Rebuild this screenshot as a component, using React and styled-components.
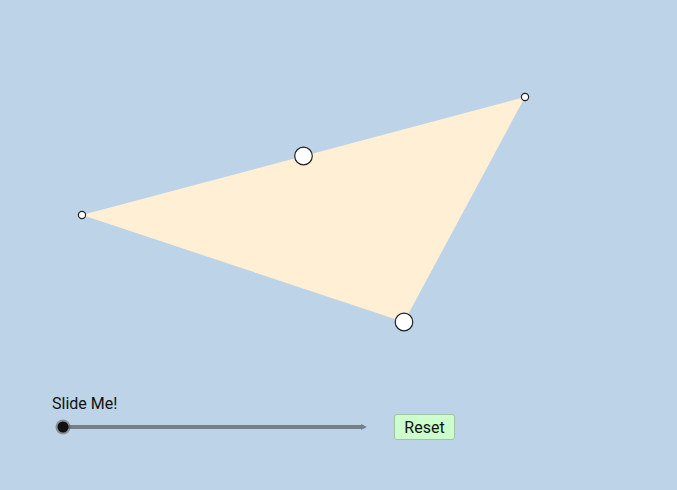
import React, { useState } from "react";
import styled, { createGlobalStyle } from "styled-components";

const GlobalStyle = createGlobalStyle`
    html, body {
        margin: 0;
        padding: 0;
        background: #bdd3e7;
    }
`;

const points = {
    a: { x: 82, y: 215 },
    b: { x: 525, y: 97 },
    c: { x: 404, y: 322 },
};

function App() {
    const [value] = useState(0);
    const mid = {
        x: (points.a.x + points.b.x) / 2,
        y: (points.a.y + points.b.y) / 2,
    };

    return (
        <>
            <GlobalStyle />
            <Page>
                <Stage width="677" height="390" viewBox="0 0 677 390">
                    <polygon
                        points={`${points.a.x},${points.a.y} ${points.b.x},${points.b.y} ${points.c.x},${points.c.y}`}
                        fill="#ffefd5"
                    />
                    <Point cx={points.a.x} cy={points.a.y} r="3.6" />
                    <Point cx={points.b.x} cy={points.b.y} r="3.6" />
                    <Point cx={mid.x} cy={mid.y} r="8.8" />
                    <Point cx={points.c.x} cy={points.c.y} r="8.8" />
                </Stage>
                <Controls>
                    <Label>Slide Me!</Label>
                    <Slider width="320" height="16" viewBox="0 0 320 16">
                        <line x1="11" y1="8" x2="311" y2="8" stroke="#757f88" strokeWidth="4" />
                        <polygon points="309,5 315,8 309,11" fill="#757f88" />
                        <circle cx={11 + value} cy="8" r="7.5" fill="#5a5a5a" opacity="0.55" />
                        <circle cx={11 + value} cy="8" r="5.5" fill="#111" />
                    </Slider>
                    <ResetButton>Reset</ResetButton>
                </Controls>
            </Page>
        </>
    );
}

export default App;

const Page = styled.div`
    width: 677px;
    height: 490px;
    background: #bdd3e7;
    font-family: Roboto, "Liberation Sans", sans-serif;
    overflow: hidden;
`;

const Stage = styled.svg`
    display: block;
`;

const Point = styled.circle`
    fill: #ffffff;
    stroke: #222;
    stroke-width: 1.2;
`;

const Controls = styled.div`
    display: grid;
    grid-template-columns: 320px auto;
    column-gap: 22px;
    row-gap: 1px;
    padding: 5px 0 0 52px;
    justify-content: start;
    align-items: center;
`;

const Label = styled.div`
    grid-column: 1 / 3;
    font-size: 16px;
    line-height: 18px;
    color: #111;
`;

const Slider = styled.svg`
    display: block;
`;

const ResetButton = styled.button`
    width: 61px;
    height: 26px;
    padding: 0;
    background: #ccffcc;
    border: 1px solid #9fc49f;
    border-radius: 3px;
    font-family: Roboto, "Liberation Sans", sans-serif;
    font-size: 16px;
    color: #111;
    cursor: pointer;
`;
